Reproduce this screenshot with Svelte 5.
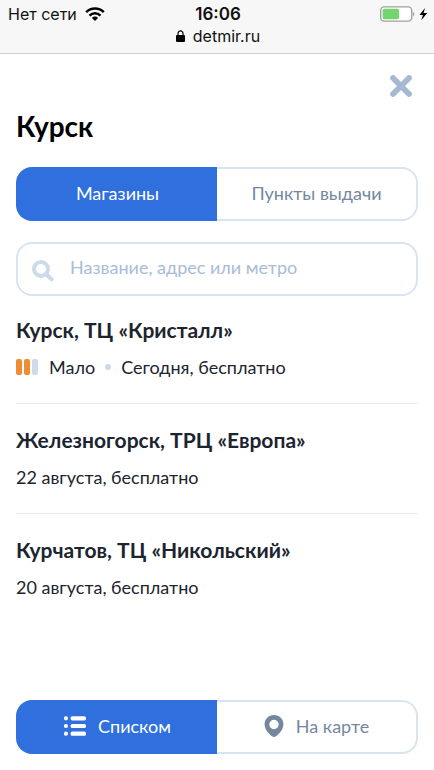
<script>
  let tab = $state('shops');
  let view = $state('list');
  let query = $state('');

  const shops = [
    { name: 'Курск, ТЦ «Кристалл»', stock: 'Мало', delivery: 'Сегодня, бесплатно' },
    { name: 'Железногорск, ТРЦ «Европа»', delivery: '22 августа, бесплатно' },
    { name: 'Курчатов, ТЦ «Никольский»', delivery: '20 августа, бесплатно' },
  ];
</script>

<div class="page">
  <header class="status">
    <div class="status-row">
      <div class="carrier">
        <span>Нет сети</span>
        <svg width="20" height="14" viewBox="0 0 20 14" aria-hidden="true">
          <g fill="none" stroke="#000" stroke-width="2.5">
            <path d="M1.2 5.2a12.6 12.6 0 0 1 17.6 0" />
            <path d="M4.5 8.6a7.9 7.9 0 0 1 11 0" />
          </g>
          <path d="M10 14L6.9 10.9a4.4 4.4 0 0 1 6.2 0z" />
        </svg>
      </div>
      <strong class="time">16:06</strong>
      <div class="battery">
        <svg width="48" height="16" viewBox="0 0 48 16" aria-hidden="true">
          <rect x="0.7" y="0.9" width="31" height="14.2" rx="3.6" fill="#fff" stroke="#a0a0a0" stroke-width="1.4" />
          <rect x="2.6" y="2.8" width="16.4" height="10.4" rx="1.6" fill="#73d66c" />
          <path d="M33.2 5.5q2.2 2.5 0 5z" fill="#909090" />
          <path d="M45 2l-5.6 7h3.5l-1.6 5.3L47.2 7h-3.6z" />
        </svg>
      </div>
    </div>
    <div class="address">
      <svg width="9" height="12" viewBox="0 0 9 12" aria-hidden="true">
        <rect y="5" width="9" height="7" rx="1" />
        <path d="M2 5.5V3.4a2.5 2.5 0 0 1 5 0v2.1" fill="none" stroke="#000" stroke-width="1.2" />
      </svg>
      <span>detmir.ru</span>
    </div>
  </header>

  <main>
    <button class="close" aria-label="Закрыть">
      <svg width="22" height="22" viewBox="0 0 22 22" aria-hidden="true">
        <path d="M3 3l16 16M19 3L3 19" stroke="#a6b8d2" stroke-width="5.8" stroke-linecap="round" />
      </svg>
    </button>
    <h1>Курск</h1>

    <div class="switch">
      <button class:active={tab === 'shops'} onclick={() => (tab = 'shops')}>Магазины</button>
      <button class:active={tab === 'points'} onclick={() => (tab = 'points')}>Пункты выдачи</button>
    </div>

    <label class="search">
      <svg width="22" height="22" viewBox="0 0 22 22" aria-hidden="true">
        <circle cx="9" cy="9" r="7" fill="none" stroke="#cddaea" stroke-width="4" />
        <path d="M14.6 14.6l4.9 4.6" stroke="#cddaea" stroke-width="4.2" stroke-linecap="round" />
      </svg>
      <input type="text" bind:value={query} placeholder="Название, адрес или метро" aria-label="Название, адрес или метро">
    </label>

    <ul class="shops">
      {#each shops as shop}
        <li>
          <h2>{shop.name}</h2>
          <p>
            {#if shop.stock}
              <span class="level"><i class="full"></i><i class="full"></i><i></i></span>
              <span>{shop.stock}</span>
              <span class="dot"></span>
            {/if}
            <span>{shop.delivery}</span>
          </p>
        </li>
      {/each}
    </ul>
  </main>

  <footer>
    <div class="switch">
      <button class:active={view === 'list'} onclick={() => (view = 'list')}>
        <svg width="22" height="20" viewBox="0 0 22 20" fill="currentColor" aria-hidden="true">
          <circle cx="2" cy="2.3" r="2.1" />
          <circle cx="2" cy="10" r="2.1" />
          <circle cx="2" cy="17.7" r="2.1" />
          <rect x="6.6" y="0.2" width="15.4" height="4.2" rx="1.6" />
          <rect x="6.6" y="7.9" width="15.4" height="4.2" rx="1.6" />
          <rect x="6.6" y="15.6" width="15.4" height="4.2" rx="1.6" />
        </svg>
        <span>Списком</span>
      </button>
      <button class:active={view === 'map'} onclick={() => (view = 'map')}>
        <svg width="20" height="22" viewBox="0 0 20 22" fill="currentColor" aria-hidden="true">
          <path fill-rule="evenodd" d="M10 0C4.6 0 0.6 4 0.6 9.2C0.6 14.2 4.2 18.2 8 21.3Q10 22.7 12 21.3C15.8 18.2 19.4 14.2 19.4 9.2C19.4 4 15.4 0 10 0ZM10 4.8A4.7 4.7 0 1 1 10 14.2A4.7 4.7 0 0 1 10 4.8Z" />
        </svg>
        <span>На карте</span>
      </button>
    </div>
  </footer>
</div>

<style>
  :global(body) {
    margin: 0;
    background: #fff;
  }

  .page {
    display: flex;
    flex-direction: column;
    min-height: 100vh;
    font-family: Lato, "Open Sans", sans-serif;
    color: #1c252f;
  }

  .status {
    padding: 3px 6px 6px 8px;
    background: #f7f7f7;
    border-bottom: 1px solid #d2d2d2;
    font-family: Inter, "Liberation Sans", sans-serif;
    font-size: 16px;
    line-height: 22px;
    color: #111;
  }

  .status-row {
    display: grid;
    grid-template-columns: 1fr auto 1fr;
    align-items: center;
  }

  .carrier,
  .address {
    display: flex;
    align-items: center;
    gap: 8px;
  }

  .time {
    font-size: 17px;
    font-weight: 600;
  }

  .battery {
    display: flex;
    justify-content: flex-end;
  }

  .address {
    justify-content: center;
  }

  main {
    display: flex;
    flex-direction: column;
    padding: 21px 16px 0;
  }

  button {
    border: 0;
    padding: 0;
    background: none;
    font: inherit;
    color: inherit;
    cursor: pointer;
  }

  .close {
    display: flex;
    align-self: flex-end;
    margin-right: 6px;
  }

  h1 {
    margin: 12px 0 24px;
    font-size: 28px;
    line-height: 34px;
    color: #000;
  }

  .switch {
    display: flex;
    height: 54px;
    font-size: 18px;
  }

  .switch button {
    flex: 1;
    display: flex;
    align-items: center;
    justify-content: center;
    gap: 12px;
    border: 2px solid #d9e4f1;
    padding-bottom: 2px;
    color: #74879f;
  }

  .switch button:first-child {
    border-right: 0;
    border-radius: 16px 0 0 16px;
  }

  .switch button:last-child {
    border-left: 0;
    border-radius: 0 16px 16px 0;
  }

  .switch .active {
    border-color: #2f70de;
    background: #2f70de;
    color: #fff;
  }

  .search {
    display: flex;
    align-items: center;
    gap: 16px;
    height: 50px;
    margin: 21px 0 22px;
    padding: 0 16px 0 14px;
    border: 2px solid #d9e4f1;
    border-radius: 16px;
  }

  .search svg {
    margin-top: 4px;
  }

  .search input {
    flex: 1;
    min-width: 0;
    border: 0;
    padding: 0 0 4px;
    outline: none;
    background: none;
    font: inherit;
    font-size: 18px;
    color: #1c252f;
  }

  .search input::placeholder {
    color: #a9bcd6;
    opacity: 1;
  }

  .shops {
    margin: 0;
    padding: 0;
    list-style: none;
  }

  li {
    padding-bottom: 24px;
  }

  li + li {
    padding-top: 24px;
    border-top: 1px solid #e9ebf0;
  }

  h2 {
    margin: 0 0 13px;
    font-size: 21px;
    line-height: 24px;
  }

  p {
    display: flex;
    align-items: center;
    margin: 0;
    font-size: 18px;
    line-height: 24px;
  }

  .level {
    display: flex;
    gap: 2px;
    margin-right: 11px;
  }

  .level i {
    width: 6px;
    height: 16px;
    border-radius: 2px;
    background: #cddaea;
  }

  .level .full {
    background: #f08c34;
  }

  .dot {
    width: 6px;
    height: 6px;
    margin: 0 10px;
    border-radius: 50%;
    background: #cddaea;
  }

  footer {
    position: sticky;
    bottom: 0;
    margin-top: auto;
    padding: 16px;
    background: #fff;
  }
</style>
